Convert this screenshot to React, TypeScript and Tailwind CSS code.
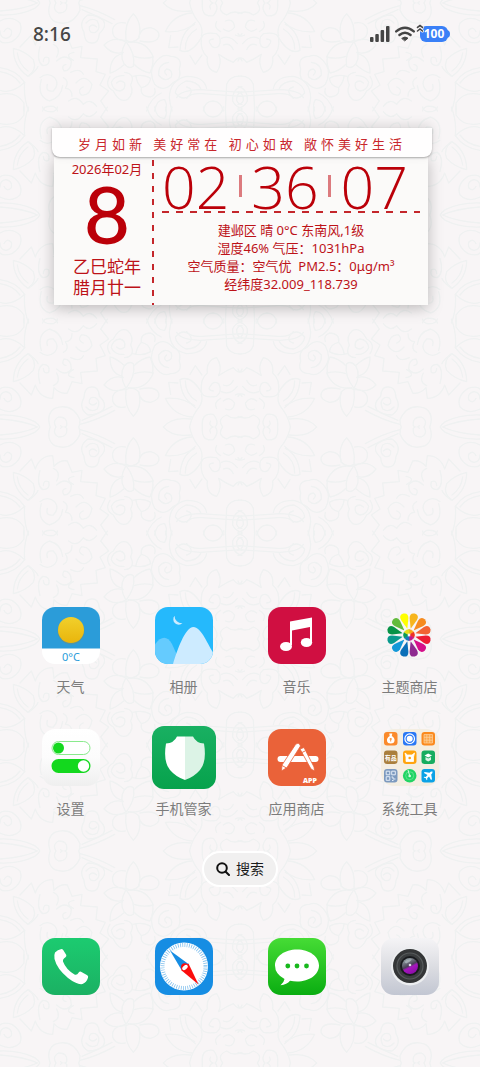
import type { ReactNode } from "react";

/* One quarter of the wallpaper tile, mirrored four ways */
function Motif() {
  return (
    <g transform="scale(0.3333)" fill="none" stroke="#eff1f1" strokeWidth="4" strokeLinecap="round" strokeLinejoin="round">
      {/* small open flower */}
      <path d="M378 118 Q372 66 400 38 Q428 66 416 112 Q398 130 378 118Z" />
      <path d="M416 112 Q420 80 452 80 Q482 88 476 108 Q466 130 420 120" />
      <path d="M376 118 Q334 118 338 84 Q346 60 376 66" />
      <path d="M376 122 Q340 104 312 132 Q336 164 370 154" />
      <path d="M378 122 Q356 160 372 188 Q386 206 400 196 Q408 160 378 122Z" />
      <path d="M384 124 Q438 116 460 168 Q430 176 402 166" />
      <path d="M402 190 Q424 212 450 216 Q462 190 458 168" />
      <path d="M368 158 Q330 166 330 216 Q346 214 374 190" />
      {/* stems */}
      <path d="M240 14 Q290 26 344 56 M246 26 Q290 44 336 68" />
      <path d="M0 30 Q80 24 120 2 M0 42 Q60 44 104 22 Q124 8 122 -6" />
      {/* scrolls */}
      <path d="M152 2 Q136 44 164 62 Q216 80 240 28 Q240 4 228 -6 M178 -6 Q150 22 176 36 Q204 36 200 10 Q190 0 182 10" />
      <path d="M264 42 Q234 62 252 94 Q254 128 276 126 Q296 128 298 98 Q322 76 310 58 Q292 42 264 42Z M290 78 Q278 66 268 78 Q266 98 286 94 Q304 84 292 60 Q274 48 258 66" />
      <path d="M0 60 Q34 42 60 66 Q72 98 36 122 Q8 130 0 120 M12 92 Q20 74 34 88 Q38 108 18 112 Q0 110 0 90" />
      <path d="M330 226 Q312 254 340 270 Q358 306 382 296 Q404 276 392 252 Q408 218 374 214 M350 246 Q362 234 374 246 Q378 266 360 270 Q338 268 334 244 Q344 222 372 224" />
      <path d="M398 226 Q430 218 452 232 Q448 256 424 260 Q410 244 408 226 M424 262 Q420 286 452 288 Q470 282 464 262" />
      <path d="M462 190 Q486 154 512 166 Q550 168 538 204 Q546 236 518 246 Q490 276 464 250 Q446 214 462 190Z M500 222 Q488 212 500 204 Q520 206 514 228 Q494 246 476 222 Q474 188 506 184" />
      {/* knot around the ring */}
      <path d="M726 274 L600 266 Q540 268 530 290 M726 286 L606 278 Q570 276 560 292" />
      <path d="M620 262 Q612 226 560 226 Q510 236 508 290 Q510 310 516 330 M602 262 Q590 240 558 240 Q528 254 526 276 Q546 300 566 286 Q584 264 560 258" />
      <path d="M726 226 Q690 222 680 250 L676 330 M726 256 Q696 264 698 300 Q706 318 726 322 M726 272 Q710 276 710 298 Q714 310 726 310" />
      <path d="M610 330 Q614 300 640 300 Q664 302 670 330 M440 330 Q452 290 484 276 M464 330 Q470 294 494 296 Q504 314 496 330" />
      {/* large flower, top centre */}
      <path d="M568 0 Q572 30 590 56 Q612 80 604 104" />
      <path d="M578 -4 Q520 -28 484 -2 Q510 38 572 30" />
      <path d="M576 36 Q520 40 496 92 Q556 96 586 64" />
      <path d="M584 70 Q544 90 540 148 Q574 164 608 104 M590 84 Q556 104 556 144" />
      <path d="M512 104 L506 140 L534 138 M570 164 L586 190 L606 162" />
      <path d="M604 110 Q610 92 650 98 Q668 112 656 136 Q640 146 632 130 Q620 116 640 114 M604 110 Q600 150 622 168 Q618 206 650 214 Q668 188 656 160 Q680 176 700 184 Q720 160 726 180" />
      <path d="M608 0 Q600 50 640 44 Q660 20 644 4 Q624 10 632 24 M668 6 Q650 30 680 42 Q700 26 726 38 M676 60 Q700 50 704 78 Q690 100 670 84 M650 62 Q640 80 662 92 M706 102 Q720 110 726 98" />
      <path d="M664 112 Q690 100 712 128 M670 132 Q690 124 700 146" />
      {/* peony, left edge */}
      <path d="M0 200 Q48 206 74 244 Q36 280 0 268 M0 212 Q40 218 60 246" />
      <path d="M40 142 Q40 196 84 226 Q112 206 100 176 Q76 150 40 142Z M52 156 Q56 190 84 210" />
      <path d="M74 244 Q70 290 86 330 M0 280 Q50 270 72 306 L72 330 M86 226 Q112 206 114 196" />
      <path d="M60 138 L94 102 L106 132 Q120 92 158 92 L162 124 Q180 104 202 108 L216 142 L246 136 L242 170 L292 174 L288 212 L316 220 L300 252 L326 270 L302 300 L322 330" />
      <path d="M120 136 Q108 180 128 194 Q152 194 146 170 Q130 164 130 182 M170 180 Q196 156 214 180 Q214 210 192 210 Q182 194 198 190 M160 130 Q184 140 170 168 M222 154 Q190 160 220 178" />
      <path d="M120 230 Q142 212 164 230 Q180 250 160 270 Q136 274 142 250 M124 236 Q110 286 148 300 Q184 290 188 254 M228 246 Q254 216 276 250 Q270 286 244 282 Q230 266 250 258 M212 214 Q240 200 250 220 M206 300 Q230 280 250 310 Q270 290 290 316" />
      <path d="M128 330 Q130 314 160 316 Q172 322 172 330 M190 230 Q210 240 196 262 Q216 262 216 286" />
    </g>
  );
}

function Wallpaper() {
  return (
    <svg className="absolute inset-0 h-full w-full" viewBox="0 0 480 1067" preserveAspectRatio="xMidYMid slice" aria-hidden="true">
      <defs>
        <g id="motif">
          <Motif />
        </g>
        <g id="motif-row">
          <use href="#motif" />
          <use href="#motif" transform="translate(480 0) scale(-1 1)" />
        </g>
        <pattern id="damask" width="480" height="212" y="3" patternUnits="userSpaceOnUse">
          <use href="#motif-row" y="-2" />
          <use href="#motif-row" transform="translate(0 214) scale(1 -1)" />
        </pattern>
      </defs>
      <rect width="480" height="1067" fill="url(#damask)" />
    </svg>
  );
}

function StatusBar() {
  return (
    <header className="flex h-[68px] items-center justify-between pr-8 pl-[33px] text-[#454545]">
      <time className="text-[19px] leading-6 font-medium">8:16</time>
      <div className="flex items-center">
        <svg width="20" height="16" viewBox="0 0 20 16" fill="#454545">
          <rect x="0" y="11" width="3.5" height="5" rx="1" />
          <rect x="5.3" y="8" width="3.5" height="8" rx="1" />
          <rect x="10.6" y="4" width="3.5" height="12" rx="1" />
          <rect x="16" y="0" width="3.5" height="16" rx="1" />
        </svg>
        <svg className="ml-1" width="22" height="16" viewBox="0 0 22 16" fill="none" stroke="#454545" strokeWidth="2.4" strokeLinecap="round">
          <path d="M2.2 5.4Q11 -2 19.8 5.4" />
          <path d="M5.4 9Q11 4.4 16.6 9" />
          <path d="M8 12.2Q11 9.8 14 12.2L11 14.6Z" fill="#454545" strokeWidth="1" strokeLinejoin="round" />
        </svg>
        <div className="relative ml-1 flex h-4 w-7 items-center justify-center rounded-md bg-[#3a80f7] text-[12px] leading-4 font-bold text-white">
          100
          <span className="absolute top-1 -right-0.5 h-2 w-1 rounded-r-full bg-[#3a80f7]" />
          <svg className="absolute -top-0.5 -left-1" width="8" height="9" viewBox="0 0 8 9" fill="none" stroke="#f8f5f6" strokeLinecap="round">
            <path d="M1.5 3.4L4 1.5L6.5 3.4M1.5 7L4 5L6.5 7" strokeWidth="3" />
            <path d="M1.5 3.4L4 1.5L6.5 3.4M1.5 7L4 5L6.5 7" stroke="#454545" strokeWidth="1.6" />
          </svg>
        </div>
      </div>
    </header>
  );
}

function CalendarWidget() {
  return (
    <section className="mt-[60px] mr-12 ml-[52px] text-[#bd1218]">
      <div className="relative z-10 flex h-[29px] items-center justify-center rounded-b-lg bg-[#fffefe] pt-1 text-[13px] tracking-[4px] whitespace-nowrap text-[#c9272c] shadow-[0_1px_2px_rgba(0,0,0,0.3),0_-3px_12px_rgba(0,0,0,0.12)]">
        岁月如新 美好常在 初心如故 敞怀美好生活
      </div>
      <div className="mr-1 ml-0.5 flex h-[148px] bg-[#fbfaf9] shadow-[0_3px_14px_rgba(0,0,0,0.25)]">
        <div className="flex w-[98px] flex-col items-center pt-[3px] pl-2">
          <p className="text-[13px] leading-[18px] whitespace-nowrap">2026年02月</p>
          <p className="font-[Lato,sans-serif] text-[80px] leading-[70px] font-medium text-[#bb0009]">8</p>
          <p className="mt-2 text-[17px] leading-[21px]">
            乙巳蛇年
            <br />
            腊月廿一
          </p>
        </div>
        <div className="mt-[3px] w-0.5 bg-[repeating-linear-gradient(to_bottom,#c4262b_0_6px,transparent_6px_13px)]" />
        <div className="flex flex-1 flex-col pr-2 pl-2">
          <div className="flex h-[54px] items-center justify-between pt-1 pr-3 font-['Open_Sans',sans-serif] text-[59px] leading-[54px] font-light text-[#bb0009]">
            <span>02</span>
            <span className="h-[22px] w-[3px] bg-[#dc7b7f]" />
            <span>36</span>
            <span className="h-[22px] w-[3px] bg-[#dc7b7f]" />
            <span>07</span>
          </div>
          <div className="h-0.5 bg-[repeating-linear-gradient(to_right,#c4262b_0_7px,transparent_7px_14px)]" />
          <div className="mt-2 text-center text-[13px] leading-[18px] whitespace-pre">
            <p>建邺区 晴 0°C 东南风,1级</p>
            <p>湿度46% 气压：1031hPa</p>
            <p>空气质量：空气优  PM2.5：0μg/m³</p>
            <p>经纬度32.009_118.739</p>
          </div>
        </div>
      </div>
    </section>
  );
}

function Icon({ children }: { children: ReactNode }) {
  return (
    <svg width="58" height="57" viewBox="0 0 58 57" aria-hidden="true">
      {children}
    </svg>
  );
}

function WeatherIcon() {
  return (
    <Icon>
      <defs>
        <clipPath id="w-clip">
          <rect width="58" height="57" rx="13" />
        </clipPath>
        <linearGradient id="w-sun" x2="0" y2="1">
          <stop stopColor="#f1d02c" />
          <stop offset="1" stopColor="#e9b50c" />
        </linearGradient>
      </defs>
      <g clipPath="url(#w-clip)">
        <rect width="58" height="57" fill="#fff" />
        <rect width="58" height="41.5" fill="#2b9cd9" />
        <circle cx="29" cy="24" r="13.4" fill="#6d8f80" opacity="0.6" />
        <circle cx="29" cy="23" r="13" fill="url(#w-sun)" />
      </g>
      <text x="29" y="53.5" textAnchor="middle" fontSize="11" fill="#2b9cd9">0°C</text>
    </Icon>
  );
}

function AlbumIcon() {
  return (
    <Icon>
      <defs>
        <clipPath id="al-clip">
          <rect width="58" height="57" rx="13" />
        </clipPath>
      </defs>
      <g clipPath="url(#al-clip)">
        <rect width="58" height="57" fill="#25b9fc" />
        <path d="M-2 40Q9 23 17 37L26 57H-2Z" fill="#65cbfe" />
        <path d="M18 57C22 44 30 20 38.500 20C46 20 52 36 59 47V57Z" fill="#cdebff" />
        <path d="M19.500 8.800A5.500 5.500 0 0 0 27.500 16.300A7.500 7.500 0 0 1 19.500 8.800Z" fill="#cdebff" />
      </g>
    </Icon>
  );
}

function MusicIcon() {
  return (
    <Icon>
      <rect width="58" height="57" rx="13" fill="#d00f41" />
      <path d="M22 14.500L44 10.500V35H42V20L24 23.500V38H22Z" fill="#fff" />
      <ellipse cx="18" cy="39.500" rx="6" ry="4.500" fill="#fff" />
      <ellipse cx="38.500" cy="35.500" rx="5.700" ry="4.500" fill="#fff" />
    </Icon>
  );
}

const petals = [
  "#ffff00", "#f7b51c", "#f68b1f", "#f26234", "#ed1b34", "#d4108a", "#8e2a90",
  "#0a6fb8", "#1398d8", "#0a9a8d", "#079347", "#62bb3c",
];

const ring = ["#f9a51a", "#ee3124", "#c4168c", "#1779ba", "#0b9a56", "#e6df17"];

function ThemeIcon() {
  return (
    <Icon>
      {petals.map((c, i) => (
        <path key={c} transform={`rotate(${i * 30 - 15} 28 28)`} d="M28 21.500L24.200 11.500Q22.800 6.200 28 5.800Q33.200 6.200 31.800 11.500Z" fill={c} />
      ))}
      <circle cx="28" cy="28" r="6.500" fill="#f8f5f6" />
      {ring.map((c, i) => (
        <path key={c} transform={`rotate(${i * 60} 28 28)`} d="M28 22.500A5.500 5.500 0 0 1 32.760 25.250L29.700 27L28 26Z" fill={c} stroke={c} strokeWidth="0.600" />
      ))}
    </Icon>
  );
}

function SettingsIcon() {
  return (
    <Icon>
      <defs>
        <linearGradient id="st-bg" x2="0" y2="1">
          <stop stopColor="#fff" />
          <stop offset="0.5" stopColor="#fcfcfc" />
          <stop offset="1" stopColor="#efefef" />
        </linearGradient>
      </defs>
      <rect width="58" height="57" rx="13" fill="url(#st-bg)" />
      <rect x="10" y="12.500" width="38" height="13" rx="6.500" fill="#fff" stroke="#8aea8d" />
      <circle cx="16.500" cy="19" r="5.500" fill="#13d81e" />
      <rect x="9.500" y="30" width="39" height="14" rx="7" fill="#13d81e" />
      <circle cx="41.500" cy="37" r="5.700" fill="#fff" />
    </Icon>
  );
}

function GuardIcon() {
  return (
    <svg className="-m-[3px]" width="64" height="63" viewBox="0 0 64 63" aria-hidden="true">
      <defs>
        <linearGradient id="g-bg" x2="0" y2="1">
          <stop stopColor="#19b062" />
          <stop offset="1" stopColor="#07a24c" />
        </linearGradient>
      </defs>
      <rect width="64" height="63" rx="12" fill="url(#g-bg)" />
      <path d="M33 10.500H25Q22 17 14 17.500Q11 36 18 44Q24 51 33 54Z" fill="#fff" />
      <path d="M33 10.500H41Q44 17 52 17.500Q55 36 48 44Q42 51 33 54Z" fill="#dcf3e6" />
    </svg>
  );
}

function StoreIcon() {
  return (
    <Icon>
      <rect width="58" height="57" rx="13" fill="#ea6239" />
      <rect x="9.500" y="27" width="41" height="6" rx="3" fill="#fff" />
      <g stroke="#ea6239" strokeWidth="0.800" fill="#fff">
        <path d="M32 20L36 18.500L46 38L46.500 42L43 40Z" />
        <path d="M27.500 15.500Q31 12.500 32.500 17L19 38.500L13.500 42L14 36Z" />
      </g>
      <path d="M14 36.500L18.500 39" stroke="#ea6239" strokeWidth="0.900" />
      <path d="M33 24L37 22" stroke="#ea6239" strokeWidth="0.900" />
      <text x="42" y="54" textAnchor="middle" fontSize="7" fontWeight="900" fill="#fff">APP</text>
    </Icon>
  );
}

function ToolsIcon() {
  return (
    <Icon>
      <rect width="58" height="57" rx="13" fill="#f4eee2" />
      <g>
        <rect x="3" y="3" width="13.500" height="13.500" rx="3" fill="#fb8a2b" />
        <path d="M8.200 4.500H11.300L10.800 7Q14 9 13.500 12Q13 14.500 9.700 14.500Q6.500 14.500 6 12Q5.500 9 8.700 7Z" fill="#fff" />
        <path d="M9.700 9V12.500M8.500 10H11" stroke="#fb8a2b" strokeWidth="0.900" />
      </g>
      <g>
        <rect x="22" y="3" width="13.500" height="13.500" rx="3" fill="#2a78f5" />
        <circle cx="28.700" cy="9.700" r="4.800" fill="none" stroke="#fff" strokeWidth="1.200" />
        <circle cx="28.700" cy="9.700" r="3" fill="#fff" />
      </g>
      <g>
        <rect x="40.500" y="3" width="13.500" height="13.500" rx="3" fill="#fb8a1e" />
        <path d="M43 5.500H51.500V14H43ZM43 8.300H51.500M43 11.200H51.500M45.800 5.500V14M48.700 5.500V14" fill="#fca547" stroke="#fdd2a0" strokeWidth="0.700" />
      </g>
      <g>
        <rect x="3" y="21.500" width="13.500" height="13.500" rx="3" fill="#aa7f3c" />
        <text x="9.700" y="30.500" textAnchor="middle" fontSize="6" fontWeight="700" fill="#fff">有品</text>
      </g>
      <g>
        <rect x="22" y="21.500" width="13.500" height="13.500" rx="3" fill="#ffa40e" />
        <path d="M24 24L26.500 26H31L33.500 24L32.500 28V32.500H25V28Z" fill="#fff" stroke="#fff" strokeWidth="0.800" strokeLinejoin="round" />
        <circle cx="28.700" cy="29" r="1.300" fill="#ffa40e" />
      </g>
      <g>
        <rect x="40.500" y="21.500" width="13.500" height="13.500" rx="3" fill="#17ad5f" />
        <path d="M47.200 24.500L51 26.500L47.200 28.500L43.500 26.500Z" fill="#fff" />
        <path d="M44.500 28L47.200 29.500L50 28V31L47.200 32.500L44.500 31Z" fill="#d9f4e5" />
      </g>
      <g>
        <rect x="3" y="40" width="13.500" height="13.500" rx="3" fill="#7d9abf" />
        <path d="M5.200 42.200H8.800V45.800H5.200ZM10.700 42.200H14.300V45.800H10.700ZM5.200 47.700H8.800V51.300H5.200ZM10.500 48H12V50H14.500M11 51.500H12.500" fill="none" stroke="#e4edf7" strokeWidth="1" />
      </g>
      <g>
        <circle cx="28.700" cy="46.700" r="6.800" fill="#22d463" />
        <circle cx="28.700" cy="46.700" r="4" fill="none" stroke="#82eba6" strokeWidth="0.600" />
        <path d="M28.700 46.700L27 41" stroke="#d4ffe0" strokeWidth="1" />
        <circle cx="28.700" cy="47" r="1.300" fill="#d4ffe0" />
      </g>
      <g>
        <rect x="40.500" y="40" width="13.500" height="13.500" rx="3" fill="#0ba2e6" />
        <path d="M51.500 42.500Q50 42 48.500 43.700L43.500 43L43 44L46.500 46L44.700 48L43.200 47.800L42.700 48.500L44.800 49.300L45.600 51.300L46.300 50.800L46.200 49.300L48 47.600L50 51L51 50.300L50.200 45.500Q52 44 51.500 42.500Z" fill="#fff" />
      </g>
    </Icon>
  );
}

function PhoneIcon() {
  return (
    <Icon>
      <defs>
        <linearGradient id="ph-bg" x2="0" y2="1">
          <stop stopColor="#1ccb70" />
          <stop offset="1" stopColor="#1bb163" />
        </linearGradient>
      </defs>
      <rect width="58" height="57" rx="13" fill="url(#ph-bg)" />
      <path d="M13 14.500Q15.500 11.500 19.500 11Q20.500 11 21.200 12L24.300 17Q24.600 18.200 23.500 19.300Q20.500 21 21 23.500Q24 31.500 32.500 36.500Q35 37.500 36.700 34.500Q37.700 33.200 39 33.700L45.300 37.200Q46.600 38.200 46 39.800Q44.500 44.500 40.500 46Q35 47 26 40Q15 31 12.500 21Q11.800 17 13 14.500Z" fill="#fff" />
    </Icon>
  );
}

function CompassIcon() {
  return (
    <Icon>
      <rect width="58" height="57" rx="13" fill="#168de3" />
      <circle cx="29" cy="28.500" r="24" fill="#fff" />
      <circle cx="29" cy="28.500" r="21.500" fill="none" stroke="#7cbdec" strokeWidth="4" strokeDasharray="0.750 1.500" />
      <path d="M15 12.500L33.500 26L26.500 32Z" fill="#168de3" />
      <path d="M43.500 46.500L33.500 25.500L26 32Z" fill="#fb0d0d" />
      <circle cx="29.800" cy="29" r="3.800" fill="#fb0d0d" />
      <ellipse cx="30" cy="29.500" rx="3.200" ry="1.900" transform="rotate(-40 30 29.500)" fill="#fff" />
    </Icon>
  );
}

function MessageIcon() {
  return (
    <Icon>
      <defs>
        <linearGradient id="ms-bg" x2="0" y2="1">
          <stop stopColor="#46dc35" />
          <stop offset="1" stopColor="#0aad11" />
        </linearGradient>
      </defs>
      <rect width="58" height="57" rx="13" fill="url(#ms-bg)" />
      <path d="M29 11.500C41.500 11.500 51 18.500 51 27.500S41.500 43.500 29 43.500Q25.500 43.500 22 42.800Q19 46.500 12.500 47.300Q16 44.500 16.500 41Q7 36 7 27.500C7 18.500 16.500 11.500 29 11.500Z" fill="#fff" />
      <circle cx="19.800" cy="28" r="2.400" fill="#17b81c" />
      <circle cx="29" cy="28" r="2.400" fill="#17b81c" />
      <circle cx="38.500" cy="28" r="2.400" fill="#17b81c" />
    </Icon>
  );
}

function CameraIcon() {
  return (
    <Icon>
      <defs>
        <linearGradient id="cm-bg" x2="0" y2="1">
          <stop stopColor="#f5f4f6" />
          <stop offset="0.5" stopColor="#dcdde2" />
          <stop offset="1" stopColor="#c2c6d2" />
        </linearGradient>
        <linearGradient id="cm-lens" x1="0.200" x2="0.700" y2="1">
          <stop offset="0.100" stopColor="#8d9a9e" />
          <stop offset="0.480" stopColor="#4a4358" />
          <stop offset="0.600" stopColor="#a516bd" />
          <stop offset="1" stopColor="#8c0ca8" />
        </linearGradient>
      </defs>
      <rect width="58" height="57" rx="13" fill="url(#cm-bg)" />
      <circle cx="29" cy="28.500" r="19" fill="#eceef0" />
      <circle cx="29" cy="28" r="17" fill="#343637" />
      <circle cx="29" cy="28" r="13" fill="#3b3e3f" stroke="#575b5c" strokeWidth="1.200" />
      <circle cx="29" cy="28" r="10" fill="#191b1e" />
      <circle cx="29" cy="28" r="8" fill="url(#cm-lens)" />
      <path d="M23.500 24Q26 20.500 31 21.500Q28.500 24.500 25 25.500Z" fill="#b5c1c4" opacity="0.700" />
      <circle cx="29" cy="27" r="1.300" fill="#e2d9ea" />
    </Icon>
  );
}

const apps = [
  { name: "天气", icon: <WeatherIcon /> },
  { name: "相册", icon: <AlbumIcon /> },
  { name: "音乐", icon: <MusicIcon /> },
  { name: "主题商店", icon: <ThemeIcon /> },
  { name: "设置", icon: <SettingsIcon /> },
  { name: "手机管家", icon: <GuardIcon /> },
  { name: "应用商店", icon: <StoreIcon /> },
  { name: "系统工具", icon: <ToolsIcon /> },
];

const dock = [
  { name: "电话", icon: <PhoneIcon /> },
  { name: "浏览器", icon: <CompassIcon /> },
  { name: "信息", icon: <MessageIcon /> },
  { name: "相机", icon: <CameraIcon /> },
];

export default function App() {
  return (
    <div className="relative min-h-screen overflow-hidden bg-[#f8f5f6] font-['Noto_Sans','Noto_Sans_CJK_SC',sans-serif]">
      <Wallpaper />

      <div className="relative flex min-h-screen flex-col">
        <StatusBar />
        <CalendarWidget />

        {/* App grid */}
        <main className="mt-[302px] grid grid-cols-4 gap-y-8 px-3.5">
          {apps.map((app) => (
            <button key={app.name} type="button" className="flex flex-col items-center gap-[13px]">
              {app.icon}
              <span className="text-[14px] leading-5 text-[#7c7c7c]">{app.name}</span>
            </button>
          ))}
        </main>

        <button
          type="button"
          className="mt-8 flex h-9 items-center gap-1.5 self-center rounded-full border-2 border-white bg-[#f1f0f0] px-3 text-[14px] leading-5 text-[#1c1c1c]"
        >
          <svg width="14" height="14" viewBox="0 0 14 14" fill="none" stroke="#111" strokeWidth="2" strokeLinecap="round">
            <circle cx="6" cy="6" r="4.800" />
            <path d="M9.700 9.700L13 13" />
          </svg>
          搜索
        </button>

        {/* Dock */}
        <nav className="mt-[51px] grid grid-cols-4 px-3.5 pb-[70px]">
          {dock.map((app) => (
            <button key={app.name} type="button" aria-label={app.name} className="flex justify-center">
              {app.icon}
            </button>
          ))}
        </nav>
      </div>
    </div>
  );
}
